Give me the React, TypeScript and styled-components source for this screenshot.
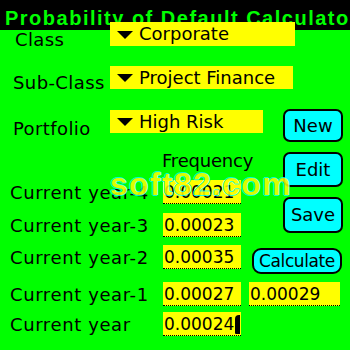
import React from "react";
import styled, { createGlobalStyle } from "styled-components";

const GREEN = "#00ff00";
const YELLOW = "#ffff00";
const CYAN = "#00ffff";

const Global = createGlobalStyle`
  html, body { margin: 0; padding: 0; background: ${GREEN}; }
  * { box-sizing: border-box; }
`;

const Screen = styled.div`
  width: 350px;
  height: 350px;
  background: ${GREEN};
  position: relative;
  overflow: hidden;
  font-family: "DejaVu Sans", sans-serif;
  font-size: 17px;
  color: #000;
`;

const TitleBar = styled.div`
  height: 30px;
  background: #000;
  color: ${GREEN};
  font-family: "Liberation Sans", Arial, sans-serif;
  font-weight: bold;
  font-size: 20px;
  letter-spacing: 1.5px;
  line-height: 26px;
  padding: 5px 0 0 5px;
  white-space: nowrap;
  overflow: hidden;
`;

const Form = styled.div`
  display: grid;
  margin-top: -8px;
  padding-left: 10px;
  grid-template-columns: 100px 53px 78px 8px 34px 60px;
  grid-template-rows: 44px 44px 39px 31px 33px 32px 37px 30px 38px;
  line-height: 24px;
`;

const TopLabel = styled.div<{ $row: number; $top: number; $left: number }>`
  grid-column: 1;
  grid-row: ${(p) => p.$row};
  padding-top: ${(p) => p.$top}px;
  padding-left: ${(p) => p.$left}px;
  font-size: 18px;
  letter-spacing: 0.4px;
  white-space: nowrap;
`;

const Selector = styled.div<{ $row: number; $w: number; $h: number }>`
  position: relative;
  grid-column: 2 / -1;
  grid-row: ${(p) => p.$row};
  justify-self: start;
  align-self: start;
  width: ${(p) => p.$w}px;
  height: ${(p) => p.$h}px;
  background: ${YELLOW};
  display: flex;
  align-items: center;
  gap: 6px;
  padding-left: 7px;
  font-size: 18px;
  white-space: nowrap;
`;

const Arrow = styled.svg`
  width: 16px;
  height: 8px;
  flex: none;
  margin-top: 1px;
`;

const FreqHeader = styled.div`
  grid-column: 3 / -1;
  grid-row: 4;
  margin-left: -1px;
  font-size: 18px;
  letter-spacing: -0.2px;
  white-space: nowrap;
`;

const RowLabel = styled.div<{ $row: number }>`
  grid-column: 1 / 3;
  grid-row: ${(p) => p.$row};
  padding-top: 1px;
  font-size: 18px;
  letter-spacing: 0.6px;
  white-space: nowrap;
`;

const Field = styled.div<{ $row: number; $col: string; $w?: number }>`
  grid-column: ${(p) => p.$col};
  grid-row: ${(p) => p.$row};
  justify-self: start;
  align-self: start;
  width: ${(p) => (p.$w ? `${p.$w}px` : "100%")};
  height: 24px;
  background: ${YELLOW};
  border-bottom: 1px dotted #000;
  padding-left: 1px;
  line-height: 24px;
  white-space: nowrap;
  display: flex;
  align-items: flex-start;
`;

const Caret = styled.span`
  display: inline-block;
  width: 5px;
  height: 19px;
  margin-top: 3px;
  margin-left: 1px;
  background: #000;
  border-top-left-radius: 4px;
  border-bottom-left-radius: 1px;
`;

const ButtonStack = styled.div`
  grid-column: 6;
  grid-row: 3 / 7;
  align-self: start;
  margin-top: -1px;
  display: flex;
  flex-direction: column;
  gap: 10px;
`;

const Button = styled.div<{ $h: number }>`
  width: 60px;
  height: ${(p) => p.$h}px;
  background: ${CYAN};
  border: 2px solid #000;
  border-radius: 7px;
  display: flex;
  align-items: center;
  justify-content: center;
  font-size: 18px;
`;

const CalcButton = styled.div`
  grid-column: 5 / -1;
  grid-row: 7;
  justify-self: end;
  align-self: start;
  margin-top: 3px;
  margin-right: 1px;
  width: 90px;
  height: 26px;
  background: ${CYAN};
  border: 2px solid #000;
  border-radius: 9px;
  display: flex;
  align-items: center;
  justify-content: center;
  line-height: 20px;
  letter-spacing: -0.4px;
`;

const Watermark = styled.div`
  position: absolute;
  left: 110px;
  top: 166px;
  font-family: "Liberation Sans", Arial, sans-serif;
  font-weight: bold;
  font-size: 32px;
  letter-spacing: 1.3px;
  color: ${YELLOW};
  text-shadow: 1px 0 ${CYAN}, -1px 0 ${CYAN}, 0 1px ${CYAN}, 0 -1px ${CYAN};
  opacity: 0.85;
  white-space: nowrap;
  pointer-events: none;
`;

const DownArrow = () => (
  <Arrow viewBox="0 0 16 8">
    <polygon points="0,0 16,0 8,8" fill="#000" />
  </Arrow>
);

const rows = [
  { label: "Current year-4", value: "0.00021", row: 5 },
  { label: "Current year-3", value: "0.00023", row: 6 },
  { label: "Current year-2", value: "0.00035", row: 7 },
  { label: "Current year-1", value: "0.00027", row: 8 },
  { label: "Current year", value: "0.00024", row: 9 },
];

export default function App() {
  return (
    <Screen>
      <Global />
      <TitleBar>Probability of Default Calculator</TitleBar>
      <Form>
        <TopLabel $row={1} $top={6} $left={5}>Class</TopLabel>
        <Selector $row={1} $w={185} $h={24}>
          <DownArrow />
          Corporate
        </Selector>
        <TopLabel $row={2} $top={5} $left={3}>Sub-Class</TopLabel>
        <Selector $row={2} $w={183} $h={23}>
          <DownArrow />
          Project Finance
        </Selector>
        <TopLabel $row={3} $top={7} $left={3}>Portfolio</TopLabel>
        <Selector $row={3} $w={153} $h={23}>
          <DownArrow />
          High Risk
        </Selector>
        <ButtonStack>
          <Button $h={33}>New</Button>
          <Button $h={35}>Edit</Button>
          <Button $h={36}>Save</Button>
        </ButtonStack>
        <FreqHeader>Frequency</FreqHeader>
        {rows.map((r) => (
          <React.Fragment key={r.label}>
            <RowLabel $row={r.row}>{r.label}</RowLabel>
            <Field $row={r.row} $col="3">
              {r.value}
              {r.row === 9 && <Caret />}
            </Field>
          </React.Fragment>
        ))}
        <CalcButton>Calculate</CalcButton>
        <Field $row={8} $col="5 / -1" $w={91}>0.00029</Field>
      </Form>
      <Watermark>soft82.com</Watermark>
    </Screen>
  );
}
